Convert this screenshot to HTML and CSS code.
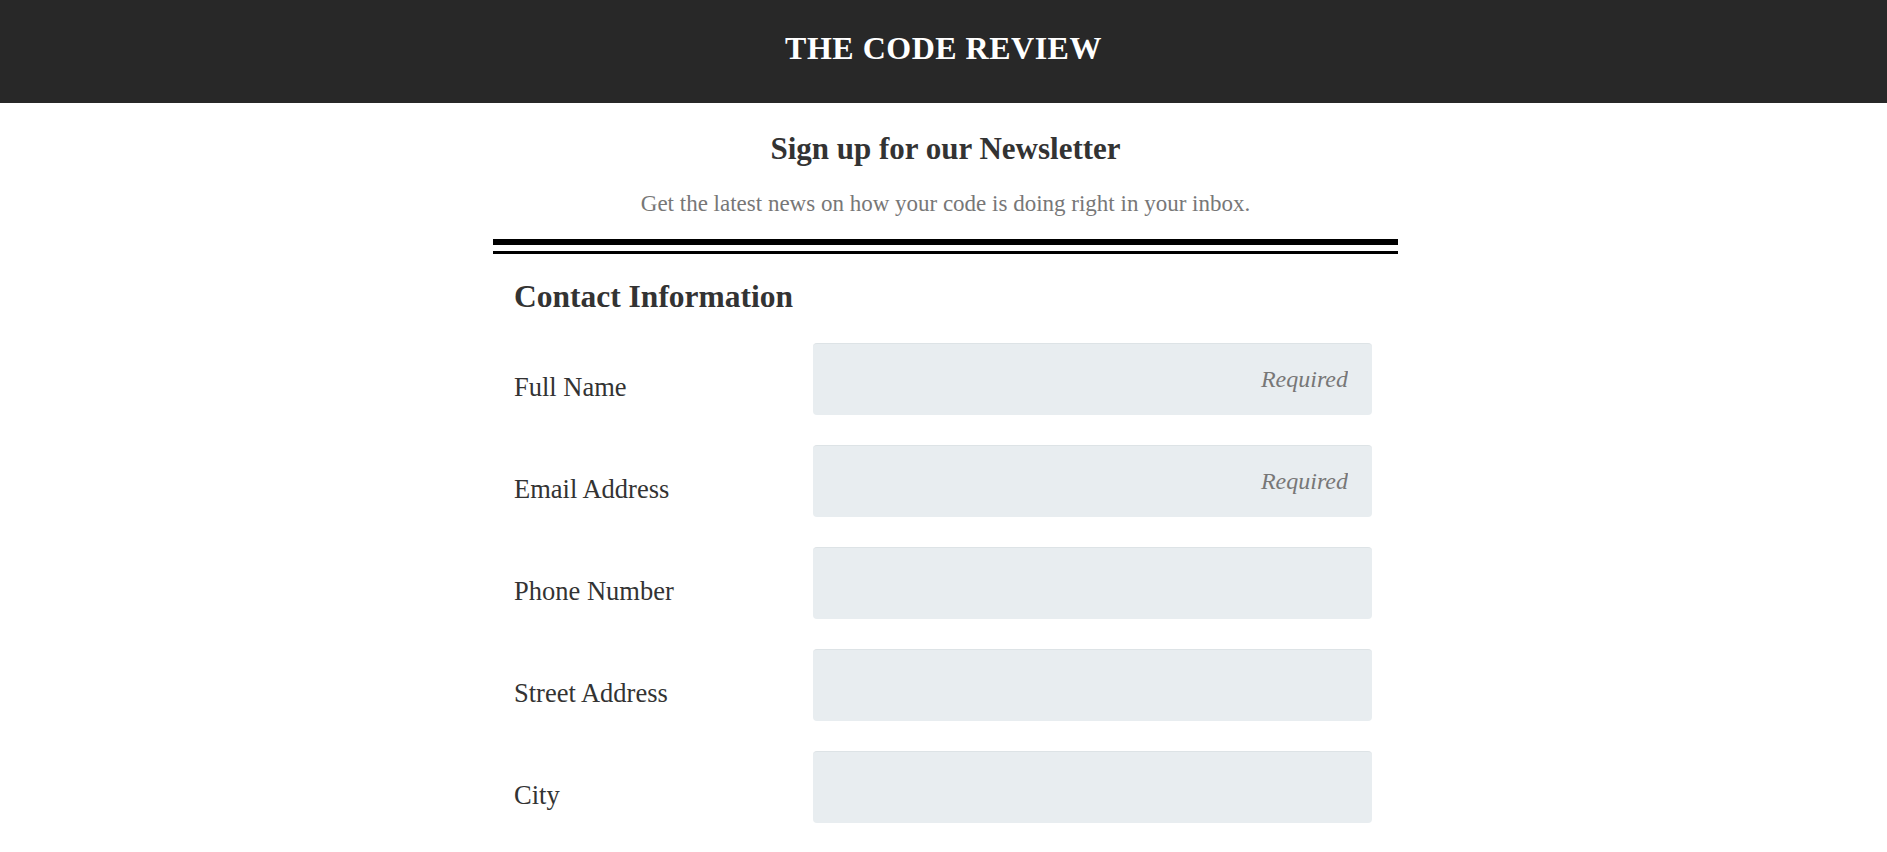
FILE: index.html
```html
<!DOCTYPE html>
<html lang="en">
<head>
<meta charset="utf-8">
<title>The Code Review</title>
<link rel="stylesheet" href="styles.css">
</head>
<body>
<header class="site-header">
  <h1 class="site-title">THE CODE REVIEW</h1>
</header>
<main class="page">
  <section class="intro">
    <h2 class="intro-title">Sign up for our Newsletter</h2>
    <p class="intro-text">Get the latest news on how your code is doing right in your inbox.</p>
  </section>
  <div class="rule-thick"></div>
  <div class="rule-thin"></div>
  <form class="signup">
    <h3 class="section-title">Contact Information</h3>
    <div class="fields">
      <label class="field-label" for="name">Full Name</label>
      <input class="field-input" id="name" type="text" placeholder="Required">
      <label class="field-label" for="email">Email Address</label>
      <input class="field-input" id="email" type="email" placeholder="Required">
      <label class="field-label" for="phone">Phone Number</label>
      <input class="field-input" id="phone" type="tel">
      <label class="field-label" for="street">Street Address</label>
      <input class="field-input" id="street" type="text">
      <label class="field-label" for="city">City</label>
      <input class="field-input" id="city" type="text">
    </div>
  </form>
</main>
</body>
</html>
```
FILE: styles.css
```css
html, body {
  margin: 0;
  padding: 0;
  background: #ffffff;
}
body {
  font-family: "Liberation Serif", "Times New Roman", serif;
  color: #333333;
}
.site-header {
  box-sizing: border-box;
  height: 103px;
  padding-bottom: 7px;
  background: #282828;
  display: flex;
  align-items: center;
  justify-content: center;
}
.site-title {
  margin: 0;
  color: #ffffff;
  font-size: 32px;
  line-height: 40px;
  font-weight: bold;
  letter-spacing: 0.5px;
}
.page {
  width: 905px;
  padding-left: 4px;
  margin: 0 auto;
}
.intro {
  text-align: center;
  padding-top: 28px;
}
.intro-title {
  margin: 0;
  font-size: 31px;
  line-height: 36px;
  font-weight: bold;
  color: #333333;
}
.intro-text {
  margin: 23px 0 0;
  font-size: 23px;
  line-height: 28px;
  color: #777777;
}
.rule-thick {
  margin-top: 21px;
  height: 6px;
  background: #000000;
}
.rule-thin {
  margin-top: 6px;
  height: 3px;
  background: #000000;
}
.signup {
  padding-left: 21px;
}
.section-title {
  margin: 24px 0 0;
  font-size: 31.5px;
  line-height: 38px;
  font-weight: bold;
  color: #333333;
}
.fields {
  margin-top: 27px;
  display: grid;
  grid-template-columns: 299px 559px;
  row-gap: 30px;
  align-items: start;
}
.field-label {
  padding-top: 28px;
  font-size: 26.5px;
  line-height: 32px;
  color: #333333;
}
.field-input {
  box-sizing: border-box;
  width: 559px;
  height: 72px;
  margin: 0;
  padding: 0 24px;
  border: none;
  border-top: 1px solid #dde3e6;
  border-radius: 4px;
  background: #e8edf0;
  font-family: "Liberation Serif", "Times New Roman", serif;
  font-size: 24px;
  color: #333333;
  text-align: right;
  outline: none;
}
.field-input::placeholder {
  font-style: italic;
  color: #777777;
}
```
